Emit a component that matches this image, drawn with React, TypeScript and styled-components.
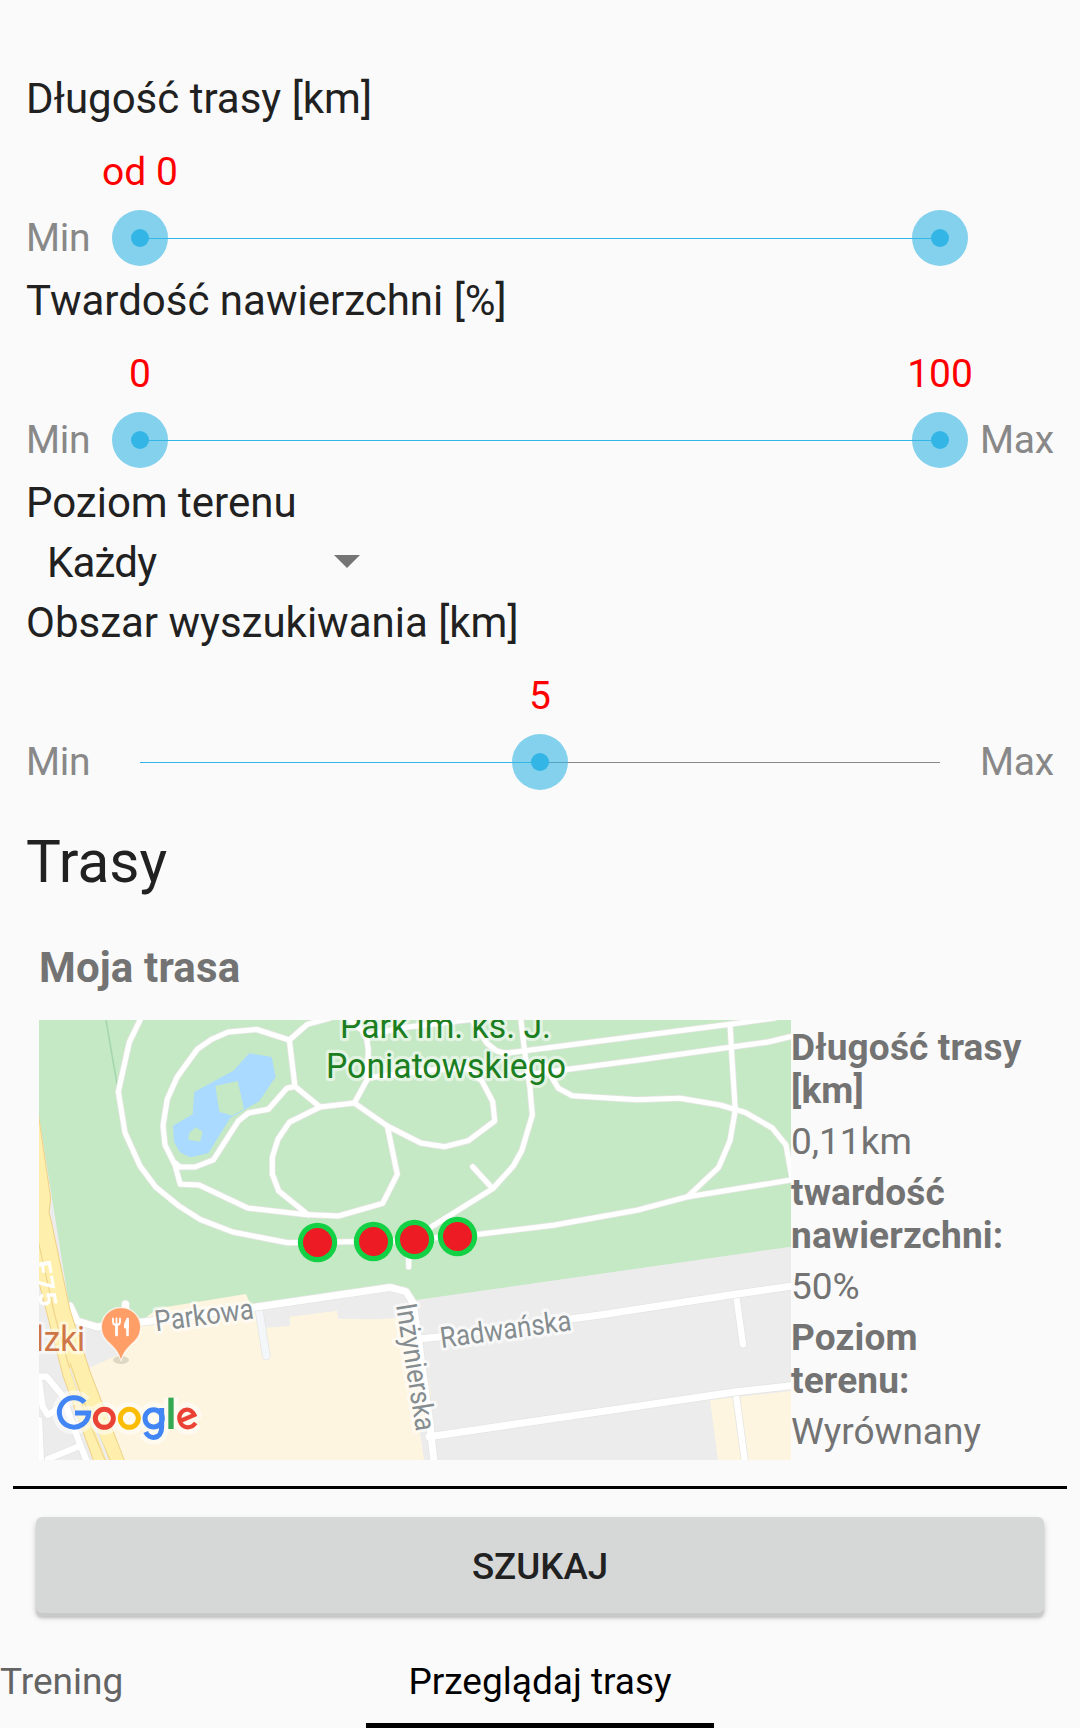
import React from "react";
import styled, { createGlobalStyle } from "styled-components";

const GlobalStyle = createGlobalStyle`
  html, body { margin: 0; padding: 0; background: #fafafa; }
  *, *::before, *::after { box-sizing: border-box; }
`;

const Screen = styled.main`
  width: 1080px;
  height: 1728px;
  padding-top: 73px;
  display: flex;
  flex-direction: column;
  overflow: hidden;
  background: #fafafa;
  color: #212121;
  font-family: Roboto, "Noto Sans", sans-serif;
`;

const FieldLabel = styled.h2`
  height: 50px;
  margin: 0;
  padding-left: 26px;
  font-size: 42px;
  font-weight: 400;
  line-height: 52px;
`;

const SliderRow = styled.div`
  display: flex;
  align-items: center;
  height: 152px;
  padding: 88px 26px 9px;
`;

const Bound = styled.span<{ $end?: boolean }>`
  flex: none;
  width: 114px;
  padding-left: ${(p) => (p.$end ? 40 : 0)}px;
  color: #888888;
  font-size: 39px;
  letter-spacing: -0.3px;
  line-height: 45px;
`;

const Track = styled.div`
  position: relative;
  flex: none;
  width: 800px;
  height: 1px;
  background: #888888;
`;

const Range = styled.div`
  height: 1px;
  background: #33b5e5;
`;

const Thumb = styled.div`
  position: absolute;
  top: 0;
  display: grid;
  place-items: center;
  width: 56px;
  height: 56px;
  border-radius: 50%;
  background: rgba(51, 181, 229, 0.6);
  transform: translate(-50%, -50%);

  &::after {
    content: "";
    width: 18px;
    height: 18px;
    border-radius: 50%;
    background: #33b5e5;
  }
`;

const ThumbValue = styled.span`
  position: absolute;
  bottom: 71px;
  color: #ff0000;
  font-size: 39px;
  line-height: 46px;
  white-space: nowrap;
`;

const SelectRow = styled.div`
  display: flex;
  align-items: center;
  width: 360px;
  height: 70px;
  padding: 2px 0.5px 0 47px;
  justify-content: space-between;
  font-size: 42px;
  letter-spacing: -0.8px;
  line-height: 50px;
`;

const Caret = styled.span`
  margin-bottom: 3px;
  border: 13px solid transparent;
  border-top-color: #757575;
  border-bottom-width: 0;
`;

const Title = styled.h1`
  margin: 30px 0 0;
  padding-left: 26px;
  font-size: 58.5px;
  font-weight: 400;
  line-height: 67px;
`;

const Route = styled.article`
  margin: 47px 13px 0;
  padding: 0 26px 26px;
  border-bottom: 3px solid #000;
  color: #737373;
`;

const RouteName = styled.h3`
  margin: 0 0 27px;
  font-size: 42px;
  font-weight: 700;
  letter-spacing: 0.15px;
  line-height: 50px;
`;

const RouteBody = styled.div`
  display: flex;
  height: 440px;
`;

const MapSvg = styled.svg`
  flex: none;
  display: block;
  width: 752px;
  height: 440px;
  font-family: Roboto, "Noto Sans", sans-serif;
`;

const Details = styled.dl`
  width: 236px;
  margin: 0;
  padding-top: 6px;
  font-size: 37px;
  line-height: 43px;
`;

const Term = styled.dt`
  font-weight: 700;
  letter-spacing: 0.15px;
`;

const Value = styled.dd`
  margin: 0;
  padding: 8px 0;
`;

const SearchButton = styled.button`
  height: 96px;
  margin: 28px 36px 0;
  padding: 4px 0 0;
  border: 0;
  border-radius: 6px;
  background: #d6d7d7;
  color: #212121;
  font: 500 36.7px/44px Roboto, "Noto Sans", sans-serif;
  box-shadow: 0 5px 2px #c9c9c9, 0 4px 6px rgba(0, 0, 0, 0.22);
`;

const Tabs = styled.nav`
  display: grid;
  grid-template-columns: 366px 348px 366px;
  flex: 1;
  margin-top: 47px;
`;

const Tab = styled.a<{ $active?: boolean }>`
  display: flex;
  justify-content: ${(p) => (p.$active ? "center" : "flex-start")};
  border-bottom: 5px solid ${(p) => (p.$active ? "#000" : "transparent")};
  color: ${(p) => (p.$active ? "#000" : "#646464")};
  font-size: 37px;
  line-height: 44px;
  white-space: nowrap;
`;

type Handle = { at: number; label?: string };

function RangeSlider({ from, to, handles, max }: { from: number; to: number; handles: Handle[]; max?: boolean }) {
  return (
    <SliderRow>
      <Bound>Min</Bound>
      <Track>
        <Range style={{ marginLeft: `${from}%`, width: `${to - from}%` }} />
        {handles.map((h) => (
          <Thumb key={h.at} style={{ left: `${h.at}%` }}>
            {h.label && <ThumbValue>{h.label}</ThumbValue>}
          </Thumb>
        ))}
      </Track>
      {max && <Bound $end>Max</Bound>}
    </SliderRow>
  );
}

const parkPaths = [
  "M141 1018L129.3 1042.3L118.3 1091.7L125 1132.7L140 1166L155.7 1187L179 1206L200 1219.3L232.7 1232L287.7 1242.7L394 1241L476.7 1234.5L553.3 1225.3L636.7 1210.3L686.7 1197L791 1180",
  "M330 1018L307.3 1024.3L289.3 1040L256.7 1029.5L228.3 1032L211.7 1039.3L197.3 1049.3L177.3 1076.7L167.3 1099L163 1125.7L165 1145L175 1165L180.3 1184.3L199 1185L247.7 1208L305 1214.5L338.3 1216L382.7 1203.3L397.3 1174.3L387.3 1126",
  "M289.3 1040L295 1086.5L286.7 1088.3L268.3 1109.3L248.3 1113L238.3 1121L213.3 1160L195 1167L180 1167L175 1163",
  "M295 1086.5L320 1107L289.3 1122.3L278 1139L272.3 1157.3V1174L278.7 1191L308.3 1215",
  "M320 1107L354.3 1103L387.3 1126L420.7 1143L444.7 1146.7L468.3 1140.7L494.7 1121L492.7 1101.7L481.7 1080.7L466 1068L430 1070L367 1078",
  "M354.3 1103L367 1080L368.3 1050L366 1034L350 1020M366 1036L400 1028L475 1019",
  "M520.7 1018L524.7 1051.7L530 1088L532.3 1115.3L521.7 1150.7L513.3 1166L492.7 1188.7L431.7 1226.7L415 1238M492.7 1188.7L472.7 1166.7",
  "M472 1020L486.7 1043L496.7 1051L505 1053.3L586.7 1042.7L730 1024.3L775 1018",
  "M520 1076L568.3 1069.3L636.7 1060.3L730 1047.3L768.3 1042L793 1036",
  "M545 1066L558.3 1088.3L572.3 1095.7L636.7 1099.7L680 1098.3L720 1105L745 1112.3L772.3 1128L786 1145L792 1178",
  "M730 1024.3L732.3 1063.3L735.3 1110L730 1140.7L718.7 1167.3L688.3 1196",
  "M404 1247L408.7 1258V1267",
];

const streets = [
  "M70 1306L77 1321L97 1327L145 1321.7L263.3 1306L390 1287.5L406 1291.7L413.3 1303L419 1343L430 1425L434 1462",
  "M419 1339L438 1337L600 1315L736.7 1294L793 1286",
  "M429 1436.7L600 1411.7L736.7 1391.7L793 1385.5",
  "M125.5 1304V1325",
];

const lanes = [
  "M736.3 1296L743 1344.5",
  "M735.7 1393L745 1462",
  "M36 1376.7H46.7L63.3 1396.7L73 1426L87 1462",
  "M39 1380L42.7 1407L48 1415L57 1409L66 1401",
  "M48 1459L78 1446.7",
  "M39 1420L41 1462",
];

const markers: [number, number][] = [
  [317.5, 1242.5],
  [373.5, 1241.5],
  [414.5, 1239.5],
  [457.5, 1236.5],
];

function Roads({ paths, width }: { paths: string[]; width: number }) {
  return (
    <g fill="none" strokeLinejoin="round" strokeLinecap="round">
      {paths.map((d) => <path key={d} d={d} stroke="#e4e6e2" strokeWidth={width + 1.6} />)}
      {paths.map((d) => <path key={d} d={d} stroke="#fff" strokeWidth={width} />)}
    </g>
  );
}

function GoogleLogo({ halo }: { halo?: boolean }) {
  const c = (color: string) => (halo ? "#fff" : color);
  const w = halo ? 44 : 15;
  return (
    <g
      transform="translate(30 1220) scale(.33333)"
      fill="none"
      strokeWidth={w}
      opacity={halo ? 0.55 : 1}
      strokeLinejoin={halo ? "round" : "miter"}
    >
      <path d="M164 547A44 44 0 1 0 176 579H135" stroke={c("#4285f4")} />
      <circle cx="223" cy="595" r="27" stroke={c("#ea4335")} />
      <circle cx="298" cy="595" r="27" stroke={c("#fbbc05")} />
      <circle cx="371" cy="595" r="26" stroke={c("#4285f4")} />
      <path d="M395 564V622C395 660 357 659 347 636" stroke={c("#4285f4")} />
      <path d="M423 533V627" stroke={c("#34a853")} strokeWidth={halo ? 44 : 16} />
      <path d="M449 604L493 585C485 567 466 564 455 576C441 591 450 621 472 622C483 622 490 618 497 609" stroke={c("#ea4335")} strokeWidth={halo ? 44 : 13} />
    </g>
  );
}

function RouteMap() {
  return (
    <MapSvg viewBox="39 1020 752 440">
      <rect x="39" y="1020" width="752" height="440" fill="#ececec" />
      <path d="M39 1020H791V1246.7L416 1300L400 1288H390L262 1305L146 1323L82 1326L70 1310L39 1117Z" fill="#c5e8c5" />
      <path
        d="M88.3 1368.3L118 1355L138 1326.7L146.7 1316.7L158.3 1308.3L246 1294L252 1308L259 1312L263 1328L290 1326V1316.7L337.3 1310.7L338 1318.7L376.7 1319.3L400 1317.7L422 1343L431 1393L428 1410L420 1433L424 1460H124L95 1383Z"
        fill="#fdf5df"
      />
      <path d="M710 1400L791 1391V1460H718Z" fill="#fdf5df" />
      <g transform="translate(0 920) scale(.33333)">
        <path d="M748 400L815 411L827 470L778 543L732 570L690 595L625 700L570 712L540 697L522 665L519 617L578 583L583 516L700 452Z" fill="#aadaff" />
        <path d="M646 498L713 483L732 567L697 587L658 575ZM588 622L608 636L600 665L565 659L568 638Z" fill="#c5e8c5" />
      </g>
      <path d="M106 1020L118 1090" stroke="#a3d6ab" strokeWidth="1.5" />

      <path d="M259.3 1312L266.3 1356" stroke="#e4e6e6" strokeWidth="8.6" strokeLinecap="round" />
      <path d="M259.3 1312L266.3 1356" stroke="#f4f7fa" strokeWidth="7" strokeLinecap="round" />
      <Roads paths={lanes} width={6.2} />
      <Roads paths={streets} width={7} />
      <Roads paths={parkPaths} width={5} />

      <path d="M37 1105L50.7 1198.3L49 1213L51 1220L70 1310L90 1371.7L125 1462H94L63.3 1376.7L37 1275Z" fill="#ffefac" stroke="#f0d084" strokeWidth="1" />
      <path d="M38 1240L55 1316L68 1363L82 1405L106 1462M70 1363L83 1400L111 1462" fill="none" stroke="#efd58d" strokeWidth="1.2" />
      <path d="M70 1368L80 1398" stroke="#eceadf" strokeWidth="1.4" />
      <path d="M92 1419L107.500 1460" stroke="#ececec" strokeWidth="2.6" />
      <text transform="translate(33 1262) rotate(81)" fontSize="25" fontWeight="700" fill="#fff" textLength="46">E75</text>

      <g paintOrder="stroke" stroke="#fff" strokeOpacity=".5" strokeWidth="6.5" strokeLinejoin="round">
        <g fill="#1b7e1f" fontSize="35.500">
          <text x="340" y="1038.300" textLength="211" lengthAdjust="spacingAndGlyphs">Park im. ks. J.</text>
          <text x="326" y="1078.200" textLength="240" lengthAdjust="spacingAndGlyphs">Poniatowskiego</text>
        </g>
        <g fill="#858d90" fontSize="29" strokeOpacity=".6">
          <text transform="translate(156 1331.300) rotate(-7.5)" textLength="99.500" lengthAdjust="spacingAndGlyphs">Parkowa</text>
          <text transform="translate(441.500 1348) rotate(-7.8)" textLength="132" lengthAdjust="spacingAndGlyphs">Radwańska</text>
          <text transform="translate(396 1305) rotate(81)" textLength="128.500" lengthAdjust="spacingAndGlyphs">Inżynierska</text>
        </g>
        <text x="85" y="1350.700" fontSize="35" fill="#cf7649" textAnchor="end" textLength="60" lengthAdjust="spacingAndGlyphs">dzki</text>
      </g>

      <ellipse cx="121" cy="1360" rx="8" ry="4" fill="#000" opacity=".12" />
      <path
        d="M121 1361C118.500 1351 113 1347 106.500 1340.500A19.700 19.700 0 1 1 135.500 1340.500C129 1347 123.500 1351 121 1361Z"
        fill="#ff9e67"
        stroke="#fff"
        strokeOpacity=".7"
        strokeWidth="1.4"
      />
      <g stroke="#fff" fill="none" strokeLinecap="round">
        <path d="M116.500 1325V1335" strokeWidth="2.8" />
        <path d="M113 1318.500V1322Q113 1325 116.500 1325Q120 1325 120 1322V1318.500M116.500 1318.500V1325" strokeWidth="1.8" />
        <path d="M127.500 1319V1335" strokeWidth="2.6" />
        <path d="M128 1318.500Q124 1321 124.500 1328H128Z" fill="#fff" strokeWidth="1" />
      </g>

      <GoogleLogo halo />
      <GoogleLogo />

      {markers.map(([x, y]) => (
        <g key={x}>
          <circle cx={x} cy={y} r="19.700" fill="#12d145" />
          <circle cx={x} cy={y} r="14.500" fill="#ed1c24" />
        </g>
      ))}
    </MapSvg>
  );
}

export default function App() {
  return (
    <Screen>
      <GlobalStyle />
      <FieldLabel>Długość trasy [km]</FieldLabel>
      <RangeSlider from={0} to={100} handles={[{ at: 0, label: "od 0" }, { at: 100 }]} />
      <FieldLabel>Twardość nawierzchni [%]</FieldLabel>
      <RangeSlider from={0} to={100} handles={[{ at: 0, label: "0" }, { at: 100, label: "100" }]} max />
      <FieldLabel>Poziom terenu</FieldLabel>
      <SelectRow>
        Każdy
        <Caret />
      </SelectRow>
      <FieldLabel>Obszar wyszukiwania [km]</FieldLabel>
      <RangeSlider from={0} to={50} handles={[{ at: 50, label: "5" }]} max />

      <Title>Trasy</Title>
      <Route>
        <RouteName>Moja trasa</RouteName>
        <RouteBody>
          <RouteMap />
          <Details>
            <Term>Długość trasy [km]</Term>
            <Value>0,11km</Value>
            <Term>twardość nawierzchni:</Term>
            <Value>50%</Value>
            <Term>Poziom terenu:</Term>
            <Value>Wyrównany</Value>
          </Details>
        </RouteBody>
      </Route>

      <SearchButton>SZUKAJ</SearchButton>
      <Tabs>
        <Tab>Trening</Tab>
        <Tab $active>Przeglądaj trasy</Tab>
      </Tabs>
    </Screen>
  );
}
